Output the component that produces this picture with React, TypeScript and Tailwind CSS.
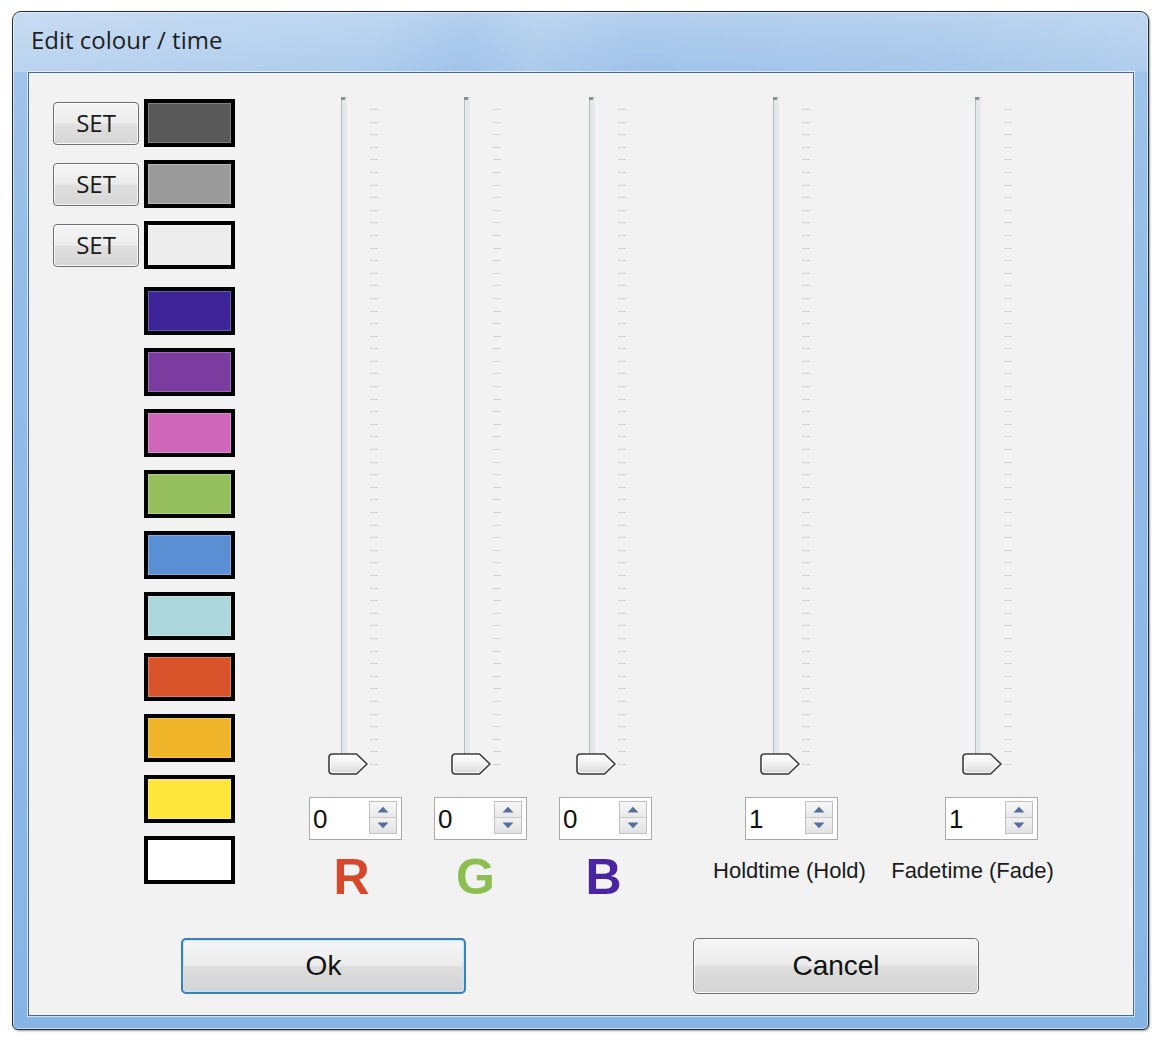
import React from "react";

const swatches: { c: string; set: boolean; extra?: string }[] = [
  { c: "bg-[#595959]", set: true },
  { c: "bg-[#9b9b9b]", set: true },
  { c: "bg-[#ececec]", set: true },
  { c: "bg-[#3e2597]", set: false, extra: "mt-[5px]" },
  { c: "bg-[#7b3c9f]", set: false },
  { c: "bg-[#d066ba]", set: false },
  { c: "bg-[#94bf5c]", set: false },
  { c: "bg-[#5a8fd3]", set: false },
  { c: "bg-[#acd7dc]", set: false },
  { c: "bg-[#d8532a]", set: false },
  { c: "bg-[#efb42a]", set: false },
  { c: "bg-[#fee73a]", set: false },
  { c: "bg-[#ffffff]", set: false },
];

const ticks = Array.from({ length: 53 }, (_, i) => i);

function Thumb() {
  return (
    <svg width="41" height="22" viewBox="0 0 41 22">
      <defs>
        <linearGradient id="thumbg" x1="0" y1="0" x2="0" y2="1">
          <stop offset="0" stopColor="#ffffff" />
          <stop offset="0.5" stopColor="#f0f0f0" />
          <stop offset="1" stopColor="#d6d6d6" />
        </linearGradient>
      </defs>
      <path
        d="M4.5 1 H28.5 L39 11 L28.5 21 H4.5 Q1 21 1 17.5 V4.5 Q1 1 4.5 1 Z"
        fill="url(#thumbg)"
        stroke="#3c3c3c"
        strokeWidth="1.6"
        strokeLinejoin="round"
      />
      <path
        d="M4.8 2.5 H28 L37 11 L28 19.5 H4.8 Q2.5 19.5 2.5 17.2 V4.8 Q2.5 2.5 4.8 2.5 Z"
        fill="none"
        stroke="#ffffff"
        strokeWidth="0.9"
        opacity="0.9"
      />
    </svg>
  );
}

function Slider({ trackPad }: { trackPad: string }) {
  return (
    <div className={`flex h-[678px] ${trackPad}`}>
      <div className="relative h-[672px] w-[6px] shrink-0">
        <div className="h-full w-full rounded-[1px] border border-[#b7bdbe] border-r-[#e6e8e8] bg-[#e3e8e8]" />
        <div className="absolute left-0 top-0 h-[3px] w-[4px] bg-[#8a8f90]" />
        <div className="absolute -left-[13px] top-[656px]">
          <Thumb />
        </div>
      </div>
      <div className="ml-[23px] mt-[12px] flex h-[656px] flex-col justify-between">
        {ticks.map((t) => (
          <div key={t} className="h-px w-[8px] bg-[#d2d2d2]" />
        ))}
      </div>
    </div>
  );
}

function SpinBox({ value }: { value: string }) {
  return (
    <div className="mt-[22px] flex h-[43px] w-[93px] border border-[#a9a9a9] bg-white">
      <div className="flex flex-1 items-center pl-[3px] font-['Liberation_Sans',Arial,sans-serif] text-[26px] leading-none text-[#111]">
        {value}
      </div>
      <div className="mb-[5px] mr-[4px] mt-[3px] flex w-[28px] flex-col border border-[#c2c2c2] bg-white">
        <div className="flex flex-1 items-center justify-center border-b border-[#c9c9c9] bg-[linear-gradient(180deg,#f7f7f7_0%,#e9e9e9_100%)]">
          <svg width="12" height="7" viewBox="0 0 12 7">
            <path d="M0.5 6.5 L6 0.8 L11.5 6.5 Z" fill="#56709e" />
          </svg>
        </div>
        <div className="flex flex-1 items-center justify-center bg-[linear-gradient(180deg,#f2f2f2_0%,#e2e2e2_100%)]">
          <svg width="12" height="7" viewBox="0 0 12 7">
            <path d="M0.5 0.5 L11.5 0.5 L6 6.2 Z" fill="#56709e" />
          </svg>
        </div>
      </div>
    </div>
  );
}

const cols = [
  {
    ml: "ml-[74px]",
    tp: "pl-[32px]",
    value: "0",
    label: (
      <span className="pr-[8px] font-['Liberation_Sans',Arial,sans-serif] text-[50px] font-bold leading-none text-[#d9472b]">
        R
      </span>
    ),
  },
  {
    ml: "ml-[32px]",
    tp: "pl-[30px]",
    value: "0",
    label: (
      <span className="pr-[10px] font-['Liberation_Sans',Arial,sans-serif] text-[50px] font-bold leading-none text-[#8cbf50]">
        G
      </span>
    ),
  },
  {
    ml: "ml-[32px]",
    tp: "pl-[30px]",
    value: "0",
    label: (
      <span className="pr-[4px] font-['Liberation_Sans',Arial,sans-serif] text-[50px] font-bold leading-none text-[#4a24a0]">
        B
      </span>
    ),
  },
  {
    ml: "ml-[93px]",
    tp: "pl-[28px]",
    value: "1",
    label: (
      <span className="mt-[8px] whitespace-nowrap pr-[4px] font-['Liberation_Sans',Arial,sans-serif] text-[22px] leading-none text-[#1a1a1a]">
        Holdtime (Hold)
      </span>
    ),
  },
  {
    ml: "ml-[107px]",
    tp: "pl-[30px]",
    value: "1",
    label: (
      <span className="mt-[8px] whitespace-nowrap pr-[38px] font-['Liberation_Sans',Arial,sans-serif] text-[22px] leading-none text-[#1a1a1a]">
        Fadetime (Fade)
      </span>
    ),
  },
];

export default function App() {
  return (
    <div className="h-[1044px] w-[1160px] overflow-hidden bg-white pl-[12px] pt-[11px]">
      <div className="flex h-[1019px] w-[1137px] flex-col rounded-b-[6px] rounded-t-[9px] border border-[#262b30] bg-[linear-gradient(180deg,#b3cfee_0%,#a0c3e9_6%,#92bce8_30%,#86b5e5_100%)] shadow-[inset_0_0_0_1px_rgba(255,255,255,0.5),1px_1px_2px_rgba(0,0,0,0.4)]">
        {/* Title bar */}
        <div className="h-[60px] shrink-0 rounded-t-[8px] bg-[linear-gradient(100deg,rgba(255,255,255,0.28)_0%,rgba(255,255,255,0.14)_32%,rgba(255,255,255,0)_40%,rgba(255,255,255,0.12)_46%,rgba(255,255,255,0)_55%,rgba(255,255,255,0.06)_80%,rgba(255,255,255,0.16)_100%)] pl-[18px] pt-[16px]">
          <div className="font-['Open_Sans','Noto_Sans',sans-serif] text-[24px] leading-none text-[#1e1e1e]">
            Edit colour / time
          </div>
        </div>
        {/* Client area */}
        <div className="ml-[15px] flex h-[944px] w-[1106px] flex-col border border-[#4a6888] bg-[#f2f2f2] shadow-[0_0_0_1px_rgba(255,255,255,0.6)]">
          <div className="flex h-[827px] items-start pl-[24px]">
            {/* Left column: SET buttons and swatches */}
            <div className="flex w-[182px] flex-col gap-[13px] pt-[26px]">
              {swatches.map((s, i) => (
                <div key={i} className={`flex h-[48px] items-center ${s.extra ?? ""}`}>
                  {s.set ? (
                    <button className="flex h-[43px] w-[86px] items-center justify-center rounded-[4px] border border-[#707070] bg-[linear-gradient(180deg,#f5f5f5_0%,#ececec_48%,#dfdfdf_52%,#d6d6d6_100%)] font-['Open_Sans','Noto_Sans',sans-serif] text-[24px] leading-none text-[#1a1a1a] shadow-[inset_0_0_0_1px_rgba(255,255,255,0.8)]">
                      SET
                    </button>
                  ) : (
                    <div className="w-[86px]" />
                  )}
                  <div className={`ml-[5px] h-[48px] w-[91px] border-[4px] border-black ${s.c} shadow-[inset_0_0_0_1px_rgba(255,255,255,0.25)]`} />
                </div>
              ))}
            </div>
            {/* Slider columns */}
            {cols.map((c, i) => (
              <div key={i} className={`flex w-[93px] flex-col pt-[24px] ${c.ml}`}>
                <Slider trackPad={c.tp} />
                <SpinBox value={c.value} />
                <div className="mt-[12px] flex h-[48px] items-start justify-center">{c.label}</div>
              </div>
            ))}
          </div>
          {/* Buttons */}
          <div className="mt-[38px] flex pl-[152px]">
            <button className="flex h-[56px] w-[285px] items-center justify-center rounded-[5px] border-2 border-[#3d80b4] bg-[linear-gradient(180deg,#f4f5f6_0%,#ececec_48%,#dddddd_52%,#d3d4d5_100%)] font-['Liberation_Sans',Arial,sans-serif] text-[28px] leading-none text-[#111] shadow-[inset_0_0_0_1px_rgba(190,230,250,0.9)]">
              Ok
            </button>
            <button className="ml-[227px] flex h-[56px] w-[286px] items-center justify-center rounded-[5px] border border-[#707070] bg-[linear-gradient(180deg,#f5f5f5_0%,#ececec_48%,#dddddd_52%,#d4d4d4_100%)] font-['Liberation_Sans',Arial,sans-serif] text-[28px] leading-none text-[#111] shadow-[inset_0_0_0_1px_rgba(255,255,255,0.85)]">
              Cancel
            </button>
          </div>
        </div>
      </div>
    </div>
  );
}
